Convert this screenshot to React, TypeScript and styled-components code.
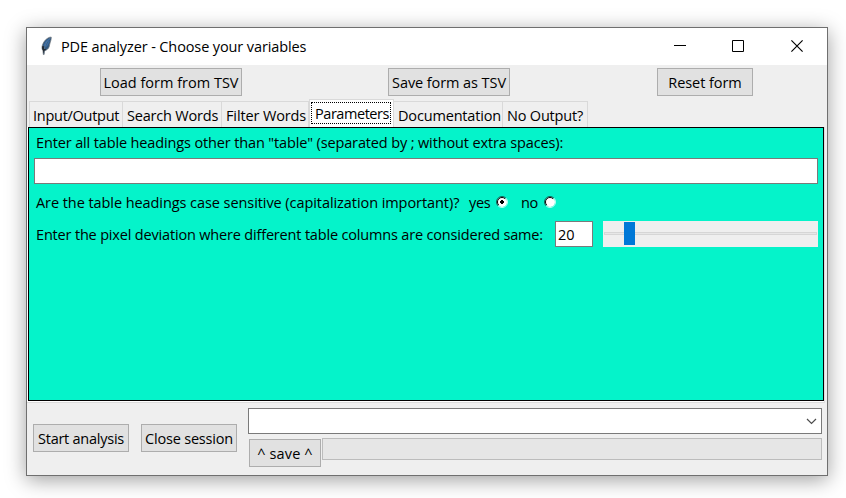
import React, { useState } from 'react';
import styled, { createGlobalStyle } from 'styled-components';

const GlobalStyle = createGlobalStyle`
  * { box-sizing: border-box; }
  body { margin: 0; background: #fff; overflow: hidden; }
  button, input { font: inherit; color: inherit; border-radius: 0; }
`;

const Desktop = styled.div`
  height: 498px;
  padding: 27px 18px 22px 26px;
  overflow: hidden;
  font: 14.5px/20px "Open Sans", "Segoe UI", sans-serif;
  color: #000;
`;

const Window = styled.main`
  display: flex;
  flex-direction: column;
  width: 802px;
  height: 449px;
  border: 1px solid #6f6f6f;
  background: #efefef;
  box-shadow: 0 4px 19px rgba(0, 0, 0, 0.38);
`;

const Text = styled.span<{ $track?: number }>`
  display: block;
  white-space: pre;
  letter-spacing: ${(p) => p.$track ?? 0}px;
`;

const TitleBar = styled.header`
  display: flex;
  align-items: flex-start;
  height: 37px;
  padding: 8px 0 0 11px;
  background: #fff;
`;

const Title = styled(Text)`
  flex: 1;
  margin-left: 9px;
  padding-top: 1px;
`;

const Caption = styled.div`
  display: flex;
  gap: 46px;
  padding: 4px 24px 0 0;
`;

const CaptionIcon = styled.svg`
  display: block;
  width: 12px;
  height: 12px;
  fill: none;
  stroke: #000;

  &:last-child { margin-left: 1px; }
`;

const Button = styled.button<{ $width: number }>`
  width: ${(p) => p.$width}px;
  height: 28px;
  padding: 4px 0 2px;
  border: 1px solid #adadad;
  background: #e1e1e1;
  display: flex;
  justify-content: center;
`;

const Toolbar = styled.div`
  display: grid;
  grid-template-columns: 288px 269px 96px;
  padding: 3px 0 0 73px;
  height: 34px;
`;

const Tabs = styled.nav`
  display: flex;
  align-items: flex-end;
  height: 28px;
  padding-left: 2px;
`;

const Tab = styled.button<{ $width: number; $active?: boolean; $joined?: boolean }>`
  display: flex;
  width: ${(p) => p.$width}px;
  height: ${(p) => (p.$active ? 28 : 26)}px;
  padding: ${(p) => (p.$active ? '2px 0 0 1px' : p.$joined ? '4px 0 0 4px' : '4px 0 0 3px')};
  border: 1px solid #d9d9d9;
  border-bottom: 0;
  border-left-width: ${(p) => (p.$joined ? 0 : 1)}px;
  background: ${(p) => (p.$active ? '#fff' : '#efefef')};
`;

const FocusRing = styled.span`
  width: 80px;
  height: 22px;
  padding: 1px 0 0 2px;
  border: 1px dotted #000;
`;

const Page = styled.section`
  width: 798px;
  height: 276px;
  border: solid #dcdcdc;
  border-width: 0 1px 1px 0;
  background: #fff;
  padding-left: 1px;
`;

const Panel = styled.div`
  width: 796px;
  height: 274px;
  border: 1px solid #000;
  padding: 5px 5px 0;
  background: #05f3ca;
`;

const Field = styled.input<{ $width: number }>`
  display: block;
  width: ${(p) => p.$width}px;
  height: 26px;
  padding: 0 2px;
  border: 1px solid #7a7a7a;
  background: #fff;
  outline: 0;
`;

const Question = styled.div<{ $gap: number; $height: number }>`
  display: flex;
  align-items: flex-start;
  height: ${(p) => p.$height}px;
  padding-top: ${(p) => p.$gap}px;
  padding-left: 2px;
`;

const RadioLabel = styled.button<{ $width: number }>`
  display: flex;
  gap: 6px;
  width: ${(p) => p.$width}px;
  padding: 0;
  border: 0;
  background: none;
`;

const PromptCell = styled.div<{ $width: number }>`
  width: ${(p) => p.$width}px;
  flex: none;
`;

const DeviationRow = styled.div`
  display: flex;
  padding-left: 2px;
`;

const DeviationText = styled(PromptCell)`
  padding-top: 4px;
`;

const Slider = styled.div`
  display: flex;
  align-items: center;
  width: 215px;
  height: 26px;
  margin-left: 10px;
  padding: 0 1px;
  background: #efefef;
`;

const Rail = styled.div`
  position: relative;
  width: 213px;
  height: 3px;
  margin-bottom: 1px;
  border: 1px solid #d6d6d6;
  background: #e7e7e7;
`;

const Thumb = styled.div`
  position: absolute;
  top: -11px;
  left: 19px;
  width: 11px;
  height: 23px;
  background: #0078d7;
`;

const Footer = styled.footer`
  display: flex;
  padding: 5px 0 0 6px;
`;

const Actions = styled.div`
  display: flex;
  gap: 12px;
  width: 215px;
  padding-top: 16px;
`;

const Output = styled.div`
  width: 574px;
`;

const Combo = styled.div`
  display: flex;
  justify-content: flex-end;
  align-items: center;
  height: 26px;
  padding-right: 4px;
  border: 1px solid #7a7a7a;
  background: #fff;
`;

const SaveRow = styled.div`
  display: flex;
  align-items: flex-start;
  padding: 4px 0 0 1px;
`;

const SaveCell = styled.div`
  padding: 1px 1px 0 0;
`;

const Progress = styled.div`
  width: 500px;
  height: 22px;
  border: 1px solid #bcbcbc;
  background: #e6e6e6;
`;

const RadioSvg = styled.svg`
  display: block;
  width: 12px;
  height: 12px;
  margin-top: 3px;
`;

const Feather = () => (
  <svg width="14" height="20" viewBox="0 0 14 20">
    <path d="M13.2 1C8.8 1.3 5 5.9 4.1 10.3c-.3 1.7 0 3 .8 4.2l.4 4 .8.1.5-3.7c2.1-.8 3.9-2.2 4.6-4.2L11.6 8.8l.7-2.6C13 4.4 13.4 2.3 13.2 1Z" fill="#31587f" stroke="#73777b" strokeWidth=".7" />
    <path d="M12.5 2C9 4.5 6.5 8.7 5.7 18" fill="none" stroke="#8095ad" strokeWidth=".6" />
    <path d="M4.2 10.3c-.5 2 .1 3.2 1 4.6l.3 3.4.8-3.6c.8-.4 1.5-.8 2-1.5L6 12.8l.2-2.7Z" fill="#252a2f" />
    <path d="M11.4 2.9C8.7 4.4 6.7 7.4 6.2 10.4M11.3 4.8 8.4 10.4" fill="none" stroke="#3e6fa5" strokeWidth="1.1" />
  </svg>
);

const Radio = ({ checked }: { checked: boolean }) => (
  <RadioSvg viewBox="0 0 12 12">
    <circle cx="6" cy="6" r="5" fill="#fff" />
    <path d="M2.1 9.9A5.5 5.5 0 0 1 9.9 2.1" fill="none" stroke="#15625a" strokeWidth="1" />
    <path d="M2.8 9.2A4.5 4.5 0 0 1 9.2 2.8" fill="none" stroke="#000" strokeWidth="1" />
    <path d="M2.1 9.9A5.5 5.5 0 0 0 9.9 2.1" fill="none" stroke="#b7fff1" strokeWidth="1" />
    {checked && <path d="M5 4h2v1h1v2H7v1H5V7H4V5h1Z" fill="#000" />}
  </RadioSvg>
);

const tabs = [
  { name: 'Input/Output', width: 94, track: -0.27 },
  { name: 'Search Words', width: 99, track: -0.2 },
  { name: 'Filter Words', width: 87, track: -0.13 },
  { name: 'Parameters', width: 85, track: -0.45 },
  { name: 'Documentation', width: 109, track: -0.17 },
  { name: 'No Output?', width: 85, track: -0.2 },
];

export default function App() {
  const [sensitive, setSensitive] = useState(true);
  return (
    <Desktop>
      <GlobalStyle />
      <Window>
        <TitleBar>
          <Feather />
          <Title $track={-0.115}>PDE analyzer - Choose your variables</Title>
          <Caption>
            <CaptionIcon viewBox="0 0 12 12"><path d="M0 5.5h12" /></CaptionIcon>
            <CaptionIcon viewBox="0 0 12 12"><path d="M.5.5h11v11H.5Z" /></CaptionIcon>
            <CaptionIcon viewBox="0 0 12 12"><path d="m.4.4 11.2 11.2M11.6.4.4 11.6" strokeWidth="1.15" /></CaptionIcon>
          </Caption>
        </TitleBar>
        <Toolbar>
          <Button $width={142}><Text>Load form from TSV</Text></Button>
          <Button $width={122}><Text $track={-0.08}>Save form as TSV</Text></Button>
          <Button $width={96}><Text $track={-0.07}>Reset form</Text></Button>
        </Toolbar>
        <Tabs>
          {tabs.map((t, i) =>
            t.name === 'Parameters' ? (
              <Tab key={t.name} $width={t.width} $active>
                <FocusRing><Text $track={t.track}>{t.name}</Text></FocusRing>
              </Tab>
            ) : (
              <Tab key={t.name} $width={t.width} $joined={i > 0}>
                <Text $track={t.track}>{t.name}</Text>
              </Tab>
            )
          )}
        </Tabs>
        <Page>
          <Panel>
            <Question $gap={0} $height={25}>
              <Text $track={-0.135}>{'Enter all table headings other than "table" (separated by ; without extra spaces):'}</Text>
            </Question>
            <Field $width={784} />
            <Question $gap={9} $height={37}>
              <PromptCell $width={433}>
                <Text $track={-0.07}>Are the table headings case sensitive (capitalization important)?</Text>
              </PromptCell>
              <RadioLabel $width={52} onClick={() => setSensitive(true)}>
                <Text $track={-0.3}>yes</Text>
                <Radio checked={sensitive} />
              </RadioLabel>
              <RadioLabel $width={40} onClick={() => setSensitive(false)}>
                <Text $track={-0.3}>no</Text>
                <Radio checked={!sensitive} />
              </RadioLabel>
            </Question>
            <DeviationRow>
              <DeviationText $width={519}>
                <Text $track={-0.175}>Enter the pixel deviation where different table columns are considered same:</Text>
              </DeviationText>
              <Field $width={38} defaultValue="20" />
              <Slider><Rail><Thumb /></Rail></Slider>
            </DeviationRow>
          </Panel>
        </Page>
        <Footer>
          <Actions>
            <Button $width={96}><Text $track={-0.25}>Start analysis</Text></Button>
            <Button $width={96}><Text $track={-0.19}>Close session</Text></Button>
          </Actions>
          <Output>
            <Combo>
              <svg width="11" height="7" viewBox="0 0 11 7"><path d="m1 1 4.5 4.5L10 1" fill="none" stroke="#4c4c4c" strokeWidth="1.2" /></svg>
            </Combo>
            <SaveRow>
              <SaveCell><Button $width={72}><Text $track={0.14}>^ save ^</Text></Button></SaveCell>
              <Progress />
            </SaveRow>
          </Output>
        </Footer>
      </Window>
    </Desktop>
  );
}
